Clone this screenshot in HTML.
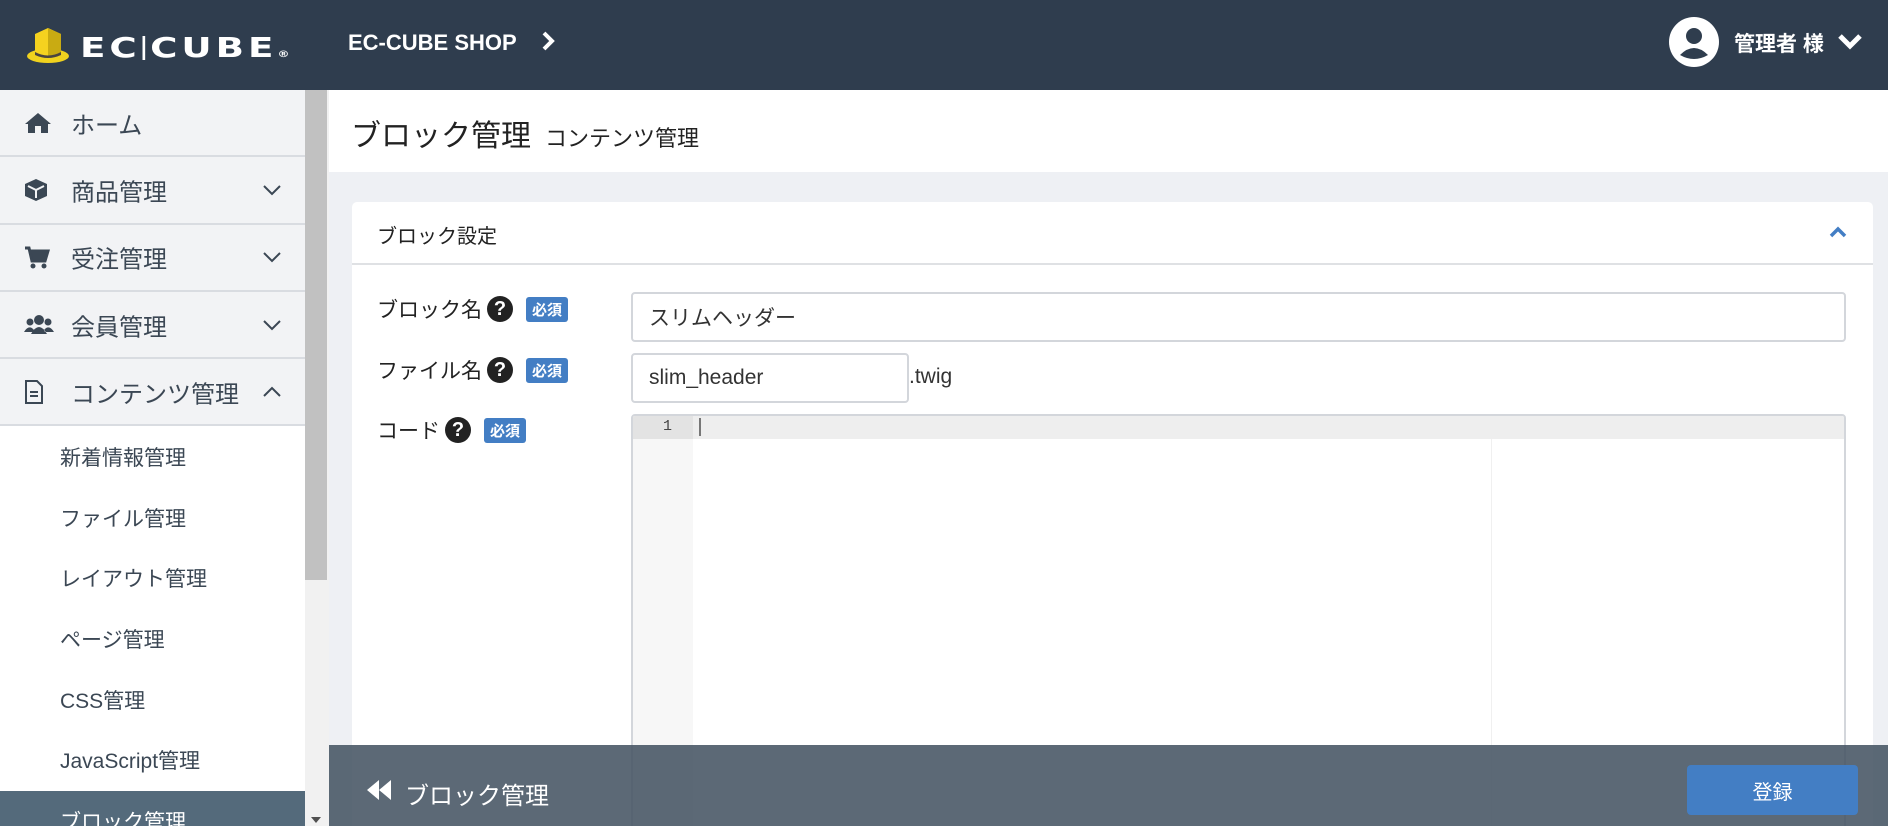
<!DOCTYPE html>
<html><head><meta charset="utf-8"><style>
*{box-sizing:border-box;margin:0;padding:0}
html,body{width:1888px;height:826px;overflow:hidden}
body{background:#eef0f4;font-family:"Liberation Sans","Noto Sans CJK JP",sans-serif;position:relative;color:#222}
.hdr{position:absolute;left:0;top:0;width:1888px;height:90px;background:#2f3d4e}
.side{position:absolute;left:0;top:90px;width:305px;height:736px;background:#fff;overflow:hidden}
.mi{height:67.3px;background:#f2f3f5;border-bottom:2px solid #d9dce1;position:relative;color:#3b4754;font-size:24px}
.mi .t{position:absolute;left:71px;top:50%;transform:translateY(-50%)}
.mi svg.ic{position:absolute;left:24px;top:50%;transform:translateY(-50%)}
.mi svg.ch{position:absolute;left:262px;top:50%;transform:translateY(-50%)}
.si{height:60.7px;position:relative;color:#3b4754;font-size:21px}
.si span{position:absolute;left:60px;top:50%;transform:translateY(-50%)}
.sb{position:absolute;left:305px;top:90px;width:24px;height:736px;background:#f1f1f1}
.lbl{position:absolute;left:377px;font-size:21px;color:#222;display:flex;align-items:center;gap:5px}
.q{width:26px;height:26px;border-radius:50%;background:#222;color:#fff;font-weight:bold;font-size:20px;display:inline-flex;align-items:center;justify-content:center}
.req{background:#437ec4;color:#fff;font-size:15px;font-weight:bold;padding:2px 6px;border-radius:3px;margin-left:8px}
.inp{position:absolute;border:2px solid #d3d6db;border-radius:4px;background:#fff;font-size:21px;color:#333;padding-left:16px;display:flex;align-items:center}
</style></head><body>
<div class="hdr">
 <svg style="position:absolute;left:26px;top:26px" width="46" height="38" viewBox="0 0 46 38"><ellipse cx="22" cy="30" rx="21" ry="7" fill="#f0d21e"/><path d="M9 8 L22 2 L35 8 L35 28 Q22 34 9 28Z" fill="#f5d21f"/><path d="M22 2 L35 8 L35 28 Q28 31 22 31Z" fill="#c9ab12"/><path d="M9 26 Q22 33 35 26 L35 29 Q22 35 9 29Z" fill="#4a4440"/></svg>
 <div style="position:absolute;left:80px;top:33px;color:#fff;font-size:28px;font-weight:bold;letter-spacing:3px;line-height:30px;font-family:'DejaVu Sans',sans-serif;transform:scaleX(1.33);transform-origin:left">EC<span style="display:inline-block;width:2px;height:24px;background:#fff;margin:0 4px 0 1px;vertical-align:-3px"></span>CUBE<span style="font-size:9px;letter-spacing:0">®</span></div>
 <div style="position:absolute;left:348px;top:30px;color:#fff;font-size:22px;font-weight:bold">EC-CUBE SHOP</div>
 <svg style="position:absolute;left:540px;top:30px" width="16" height="22" viewBox="0 0 16 22"><path d="M4 3 L12 11 L4 19" stroke="#fff" stroke-width="4" fill="none"/></svg>
 <svg style="position:absolute;left:1669px;top:17px" width="50" height="50" viewBox="0 0 50 50"><circle cx="25" cy="25" r="25" fill="#fff"/><circle cx="25" cy="19" r="8" fill="#2f3d4e"/><path d="M11 38 Q25 24 39 38 Q25 46 11 38Z" fill="#2f3d4e"/></svg>
 <div style="position:absolute;left:1734px;top:28px;color:#fff;font-size:21px;font-weight:bold">管理者 様</div>
 <svg style="position:absolute;left:1837px;top:32px" width="26" height="20" viewBox="0 0 26 20"><path d="M3 4 L13 14 L23 4" stroke="#fff" stroke-width="5" fill="none"/></svg>
</div>
<div class="side">
 <div class="mi"><svg class="ic" width="28" height="22" viewBox="0 0 28 22"><path d="M14 1 L27 12 L24 12 L24 21 L17 21 L17 14 L11 14 L11 21 L4 21 L4 12 L1 12Z" fill="#3b4754"/></svg><span class="t">ホーム</span></div>
 <div class="mi"><svg class="ic" width="24" height="24" viewBox="0 0 24 24"><path d="M12 1 L23 6 L23 18 L12 23 L1 18 L1 6Z" fill="#3b4754"/><path d="M4 8 L12 12 L20 8 M12 12 L12 20" stroke="#f2f3f5" stroke-width="2" fill="none"/></svg><span class="t">商品管理</span><svg class="ch" width="20" height="12"><path d="M2 2 L10 10 L18 2" stroke="#3b4754" stroke-width="2" fill="none"/></svg></div>
 <div class="mi"><svg class="ic" width="26" height="24" viewBox="0 0 26 24"><path d="M1 3 L5 3 L8 16 L21 16 L24 6 L6 6" stroke="#3b4754" stroke-width="3" fill="#3b4754"/><circle cx="9" cy="21" r="2.5" fill="#3b4754"/><circle cx="20" cy="21" r="2.5" fill="#3b4754"/></svg><span class="t">受注管理</span><svg class="ch" width="20" height="12"><path d="M2 2 L10 10 L18 2" stroke="#3b4754" stroke-width="2" fill="none"/></svg></div>
 <div class="mi"><svg class="ic" width="30" height="22" viewBox="0 0 30 22"><circle cx="15" cy="6" r="5" fill="#3b4754"/><circle cx="6" cy="8" r="3.5" fill="#3b4754"/><circle cx="24" cy="8" r="3.5" fill="#3b4754"/><path d="M7 20 Q15 6 23 20Z M0 18 Q5 10 10 16 L9 18Z M30 18 Q25 10 20 16 L21 18Z" fill="#3b4754"/></svg><span class="t">会員管理</span><svg class="ch" width="20" height="12"><path d="M2 2 L10 10 L18 2" stroke="#3b4754" stroke-width="2" fill="none"/></svg></div>
 <div class="mi"><svg class="ic" width="20" height="24" viewBox="0 0 20 24"><path d="M2 1 L13 1 L18 6 L18 23 L2 23Z" stroke="#3b4754" stroke-width="2" fill="none"/><path d="M6 12 L14 12 M6 16 L14 16" stroke="#3b4754" stroke-width="2"/></svg><span class="t">コンテンツ管理</span><svg class="ch" width="20" height="12"><path d="M2 10 L10 2 L18 10" stroke="#3b4754" stroke-width="2" fill="none"/></svg></div>
 <div class="si"><span>新着情報管理</span></div>
 <div class="si"><span>ファイル管理</span></div>
 <div class="si"><span>レイアウト管理</span></div>
 <div class="si"><span>ページ管理</span></div>
 <div class="si"><span>CSS管理</span></div>
 <div class="si"><span>JavaScript管理</span></div>
 <div class="si" style="background:#546a7b;color:#fff"><span style="top:30px">ブロック管理</span></div>
</div>
<div class="sb"><div style="position:absolute;left:0;top:0;width:22px;height:490px;background:#c1c1c1"></div><svg style="position:absolute;left:5px;top:726px" width="12" height="8"><path d="M1 1 L11 1 L6 7Z" fill="#505050"/></svg></div>
<div style="position:absolute;left:329px;top:90px;width:1559px;height:82px;background:#fff"></div>
<div style="position:absolute;left:351px;top:111px;font-size:30px;color:#222">ブロック管理<span style="font-size:22px;margin-left:14px">コンテンツ管理</span></div>
<div style="position:absolute;left:352px;top:202px;width:1521px;height:624px;background:#fff;border-radius:5px 5px 0 0"></div>
<div style="position:absolute;left:352px;top:263px;width:1521px;height:2px;background:#dfe1e4"></div>
<div style="position:absolute;left:377px;top:220px;font-size:20px;color:#222">ブロック設定</div>
<svg style="position:absolute;left:1829px;top:226px" width="18" height="12"><path d="M2 10 L9 3 L16 10" stroke="#437ec4" stroke-width="3.5" fill="none"/></svg>
<div class="lbl" style="top:294px">ブロック名<span class="q">?</span><span class="req">必須</span></div>
<div class="lbl" style="top:355px">ファイル名<span class="q">?</span><span class="req">必須</span></div>
<div class="lbl" style="top:415px">コード<span class="q">?</span><span class="req">必須</span></div>
<div class="inp" style="left:631px;top:292px;width:1215px;height:50px">スリムヘッダー</div>
<div class="inp" style="left:631px;top:353px;width:278px;height:50px">slim_header</div>
<div style="position:absolute;left:909px;top:365px;font-size:21px;color:#333">.twig</div>
<div style="position:absolute;left:631px;top:414px;width:1215px;height:430px;border:2px solid #d3d6db;border-radius:4px;background:#fff;overflow:hidden">
 <div style="position:absolute;left:0;top:0;width:60px;height:100%;background:#f7f7f7"></div>
 <div style="position:absolute;left:0;top:0;width:100%;height:23px;background:#eeeeee"></div>
 <div style="position:absolute;left:0;top:0;width:60px;height:23px;background:#e3e3e3"></div>
 <div style="position:absolute;left:30px;top:2px;font-size:15px;color:#444;font-family:'Liberation Mono',monospace">1</div>
 <div style="position:absolute;left:66px;top:2px;width:2px;height:18px;background:#777"></div>
 <div style="position:absolute;left:858px;top:23px;width:1px;height:100%;background:#f0f0f0"></div>
</div>
<div style="position:absolute;left:329px;top:745px;width:1559px;height:81px;background:rgba(70,84,99,0.88)"></div>
<svg style="position:absolute;left:366px;top:779px" width="26" height="22" viewBox="0 0 26 22"><path d="M13 1 L1 11 L13 21Z M25 1 L13 11 L25 21Z" fill="#fff"/></svg>
<div style="position:absolute;left:405px;top:776px;font-size:24px;color:#fff">ブロック管理</div>
<div style="position:absolute;left:1687px;top:765px;width:171px;height:50px;background:#437ec4;border-radius:4px;color:#fff;font-size:20px;display:flex;align-items:center;justify-content:center">登録</div>
</body></html>
